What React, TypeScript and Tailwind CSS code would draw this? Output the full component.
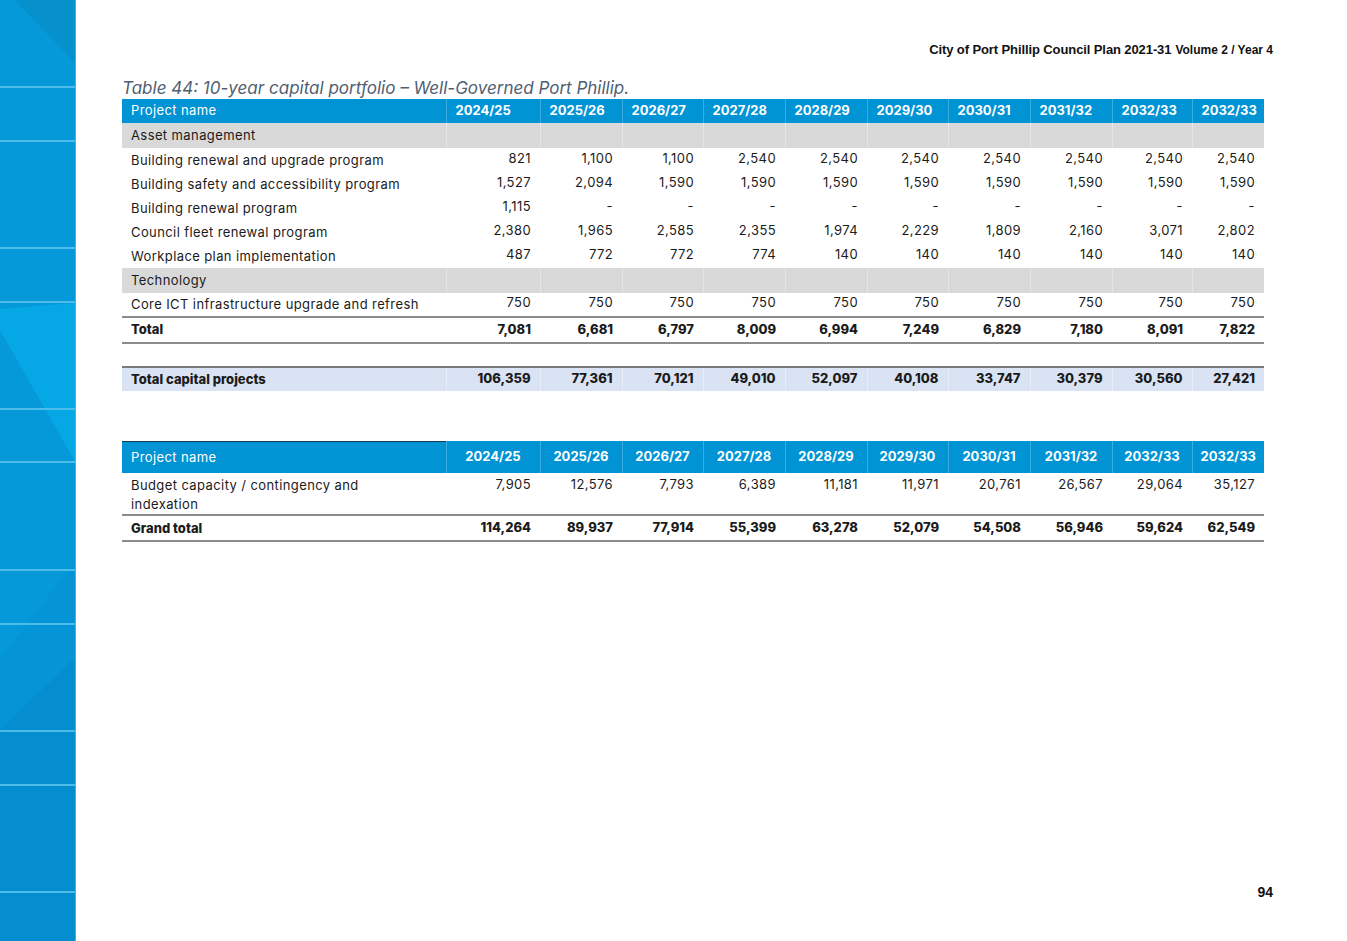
import React from 'react';

const years = ['2024/25', '2025/26', '2026/27', '2027/28', '2028/29', '2029/30', '2030/31', '2031/32', '2032/33', '2032/33'];
const colW = ['w-[94px]', 'w-[82px]', 'w-[81px]', 'w-[82px]', 'w-[82px]', 'w-[81px]', 'w-[82px]', 'w-[82px]', 'w-[80px]', 'w-[72px]'];

type Row = { kind: 'group' | 'item' | 'total'; name: string; values?: string[] };

const rows: Row[] = [
  { kind: 'group', name: 'Asset management' },
  { kind: 'item', name: 'Building renewal and upgrade program', values: ['821', '1,100', '1,100', '2,540', '2,540', '2,540', '2,540', '2,540', '2,540', '2,540'] },
  { kind: 'item', name: 'Building safety and accessibility program', values: ['1,527', '2,094', '1,590', '1,590', '1,590', '1,590', '1,590', '1,590', '1,590', '1,590'] },
  { kind: 'item', name: 'Building renewal program', values: ['1,115', '-', '-', '-', '-', '-', '-', '-', '-', '-'] },
  { kind: 'item', name: 'Council fleet renewal program', values: ['2,380', '1,965', '2,585', '2,355', '1,974', '2,229', '1,809', '2,160', '3,071', '2,802'] },
  { kind: 'item', name: 'Workplace plan implementation', values: ['487', '772', '772', '774', '140', '140', '140', '140', '140', '140'] },
  { kind: 'group', name: 'Technology' },
  { kind: 'item', name: 'Core ICT infrastructure upgrade and refresh', values: ['750', '750', '750', '750', '750', '750', '750', '750', '750', '750'] },
  { kind: 'total', name: 'Total', values: ['7,081', '6,681', '6,797', '8,009', '6,994', '7,249', '6,829', '7,180', '8,091', '7,822'] },
];

const capital = ['106,359', '77,361', '70,121', '49,010', '52,097', '40,108', '33,747', '30,379', '30,560', '27,421'];
const budget = ['7,905', '12,576', '7,793', '6,389', '11,181', '11,971', '20,761', '26,567', '29,064', '35,127'];
const grand = ['114,264', '89,937', '77,914', '55,399', '63,278', '52,079', '54,508', '56,946', '59,624', '62,549'];

function Cols() {
  return (
    <colgroup>
      <col className="w-[324px]" />
      {colW.map((w, i) => <col key={i} className={w} />)}
    </colgroup>
  );
}

function Sidebar() {
  const blocks = [88, 54, 107, 54, 107, 53, 108, 54, 107, 54, 107, 48];
  return (
    <div className="relative w-[76px] shrink-0 h-[941px] bg-[#0599da] border-r border-[#3db3e6] overflow-hidden">
      <svg className="absolute inset-0" width="76" height="941" viewBox="0 0 76 941">
        <polygon points="15,0 76,0 76,64" fill="#0690cc" />
        <polygon points="0,309 76,303 76,463 0,330" fill="#05a8e5" />
        <polygon points="0,660 76,560 76,941 0,941" fill="#0594d5" />
        <polygon points="76,657 0,730 76,730" fill="#048dcf" />
        <rect x="0" y="732" width="76" height="209" fill="#048dcf" />
      </svg>
      <div className="relative flex flex-col">
        {blocks.map((h, i) => (
          <div key={i} style={{ height: h }} className={i < blocks.length - 1 ? 'border-b-2 border-[#4cbcea]' : ''} />
        ))}
      </div>
    </div>
  );
}

export default function App() {
  const font = { fontFamily: 'Inter, "Open Sans", sans-serif' };
  return (
    <div className="w-[1347px] h-[941px] bg-white flex overflow-hidden">
      <Sidebar />
      <div className="flex-1 pl-[46px] pr-[74px] pt-[40px] relative" style={font}>
        <div className="flex justify-end items-baseline gap-1 text-[#111]" style={{ fontFamily: '"Liberation Sans", Arial, sans-serif' }}>
          <span className="text-[13px] font-bold tracking-[-0.1px]">City of Port Phillip Council Plan 2021-31</span>
          <span className="text-[12px] font-bold">Volume 2 / Year 4</span>
        </div>

        <div className="mt-[17px] text-[17px] italic text-[#4f6073] leading-[22px]">
          Table 44: 10-year capital portfolio – Well-Governed Port Phillip.
        </div>

        <table className="table-fixed border-collapse w-[1142px] text-[13px] tracking-[0.4px] text-[#1b1b1b]">
          <Cols />
          <thead>
            <tr className="bg-[#0094d4] text-white h-[24px]">
              <th className="text-left font-normal pl-[9px] pt-[1px] border-r border-[#3aaee0]">Project name</th>
              {years.map((y, i) => (
                <th key={i} className="text-left font-bold tracking-normal pl-[9px] pt-[1px] border-r border-[#3aaee0] last:border-r-0">{y}</th>
              ))}
            </tr>
          </thead>
          <tbody>
            {rows.map((r, i) => {
              if (r.kind === 'group') {
                return (
                  <tr key={i} className="bg-[#d9d9d9] h-[25px]">
                    <td className="pl-[9px] pt-[1px] border-r border-[#e6e6e6]">{r.name}</td>
                    {years.map((_, j) => <td key={j} className="border-r border-[#e6e6e6] last:border-r-0" />)}
                  </tr>
                );
              }
              if (r.kind === 'total') {
                return (
                  <tr key={i} className="h-[26px] font-extrabold tracking-normal border-t-2 border-b-2 border-[#8c8c8c]">
                    <td className="pl-[9px] pt-[1px]">{r.name}</td>
                    {r.values!.map((v, j) => <td key={j} className="text-right pr-[9px]">{v}</td>)}
                  </tr>
                );
              }
              return (
                <tr key={i} className="h-[24px]">
                  <td className="pl-[9px] pt-[2px]">{r.name}</td>
                  {r.values!.map((v, j) => <td key={j} className="text-right pr-[9px] pb-[2px]">{v}</td>)}
                </tr>
              );
            })}
            <tr className="h-[24px]"><td colSpan={11} /></tr>
            <tr className="h-[24px] bg-[#dae3f3] font-extrabold tracking-normal border-t-2 border-[#7a7a7a]">
              <td className="pl-[9px] pt-[2px] border-r border-[#e8eef8]">Total capital projects</td>
              {capital.map((v, j) => <td key={j} className="text-right pr-[9px] border-r border-[#e8eef8] last:border-r-0">{v}</td>)}
            </tr>
          </tbody>
        </table>

        <table className="table-fixed border-collapse w-[1142px] mt-[50px] text-[13px] tracking-[0.4px] text-[#1b1b1b]">
          <Cols />
          <thead>
            <tr className="bg-[#0094d4] text-white h-[32px]">
              <th className="text-left font-normal pl-[9px] pt-[1px] border-t border-[#1d3a4f] border-r border-r-[#3aaee0]">Project name</th>
              {years.map((y, i) => (
                <th key={i} className="text-center font-bold tracking-normal border-r border-[#3aaee0] last:border-r-0">{y}</th>
              ))}
            </tr>
          </thead>
          <tbody>
            <tr className="h-[41px] align-top">
              <td className="pl-[9px] pt-[3px] leading-[19px]">Budget capacity / contingency and<br />indexation</td>
              {budget.map((v, j) => <td key={j} className="text-right pr-[9px] pt-[2px] leading-[19px]">{v}</td>)}
            </tr>
            <tr className="h-[26px] font-extrabold tracking-normal border-t-2 border-b-2 border-[#8c8c8c]">
              <td className="pl-[9px] pt-[1px]">Grand total</td>
              {grand.map((v, j) => <td key={j} className="text-right pr-[9px]">{v}</td>)}
            </tr>
          </tbody>
        </table>

        <div className="absolute right-[74px] top-[882px] text-[14px] font-bold text-[#111]" style={{ fontFamily: '"Liberation Sans", Arial, sans-serif' }}>94</div>
      </div>
    </div>
  );
}
